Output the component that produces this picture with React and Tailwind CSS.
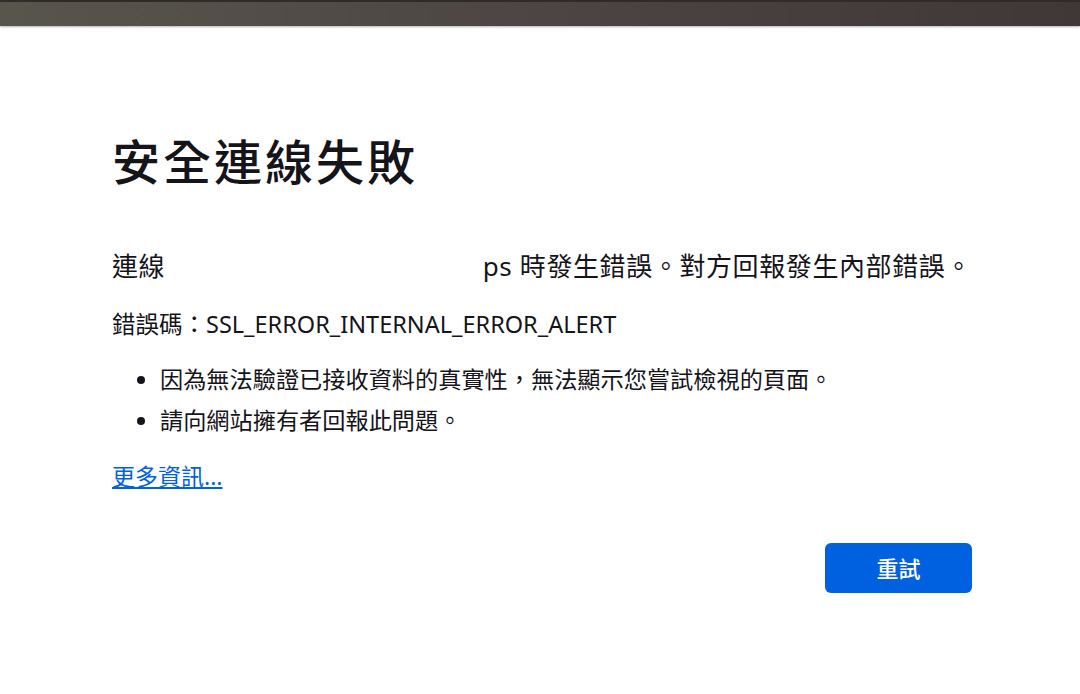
import React from 'react';

const font = { fontFamily: '"Noto Sans", "Noto Sans CJK TC", sans-serif' };

const App = () => {
  return (
    <div className="w-[1080px] h-[694px] bg-white overflow-hidden text-[#15141a]" style={font}>
      <div className="h-[26px] border-t-2 border-[#2e2b28] bg-gradient-to-r from-[#58554d] via-[#4c4543] to-[#403737] shadow-[0_1px_2px_rgba(0,0,0,0.3)]"></div>

      <div className="pl-[112px] pr-[108px] pt-[106px]">
        <h1 className="text-[48px] leading-[60px] font-medium tracking-[3px]">安全連線失敗</h1>

        <p className="mt-[56px] text-[26px] leading-[36px] tracking-[0.6px] flex items-center whitespace-nowrap">
          <span>連線</span>
          <span className="inline-block w-[326px]"></span>
          <span>ps 時發生錯誤。對方回報發生內部錯誤。</span>
        </p>

        <p className="mt-[24px] text-[23.5px] leading-[32px]">錯誤碼：SSL_ERROR_INTERNAL_ERROR_ALERT</p>

        <ul className="mt-[22px] pl-[48px] list-disc text-[23.2px] leading-[34px] space-y-[7px]">
          <li>因為無法驗證已接收資料的真實性，無法顯示您嘗試檢視的頁面。</li>
          <li>請向網站擁有者回報此問題。</li>
        </ul>

        <a href="#" className="inline-block mt-[23px] text-[23px] leading-[32px] text-[#0061e0] underline">
          更多資訊...
        </a>

        <div className="flex justify-end mt-[51px]">
          <button className="w-[147px] h-[50px] rounded-[6px] bg-[#0061e0] text-white text-[22px] font-medium">
            重試
          </button>
        </div>
      </div>
    </div>
  );
};

export default App;
